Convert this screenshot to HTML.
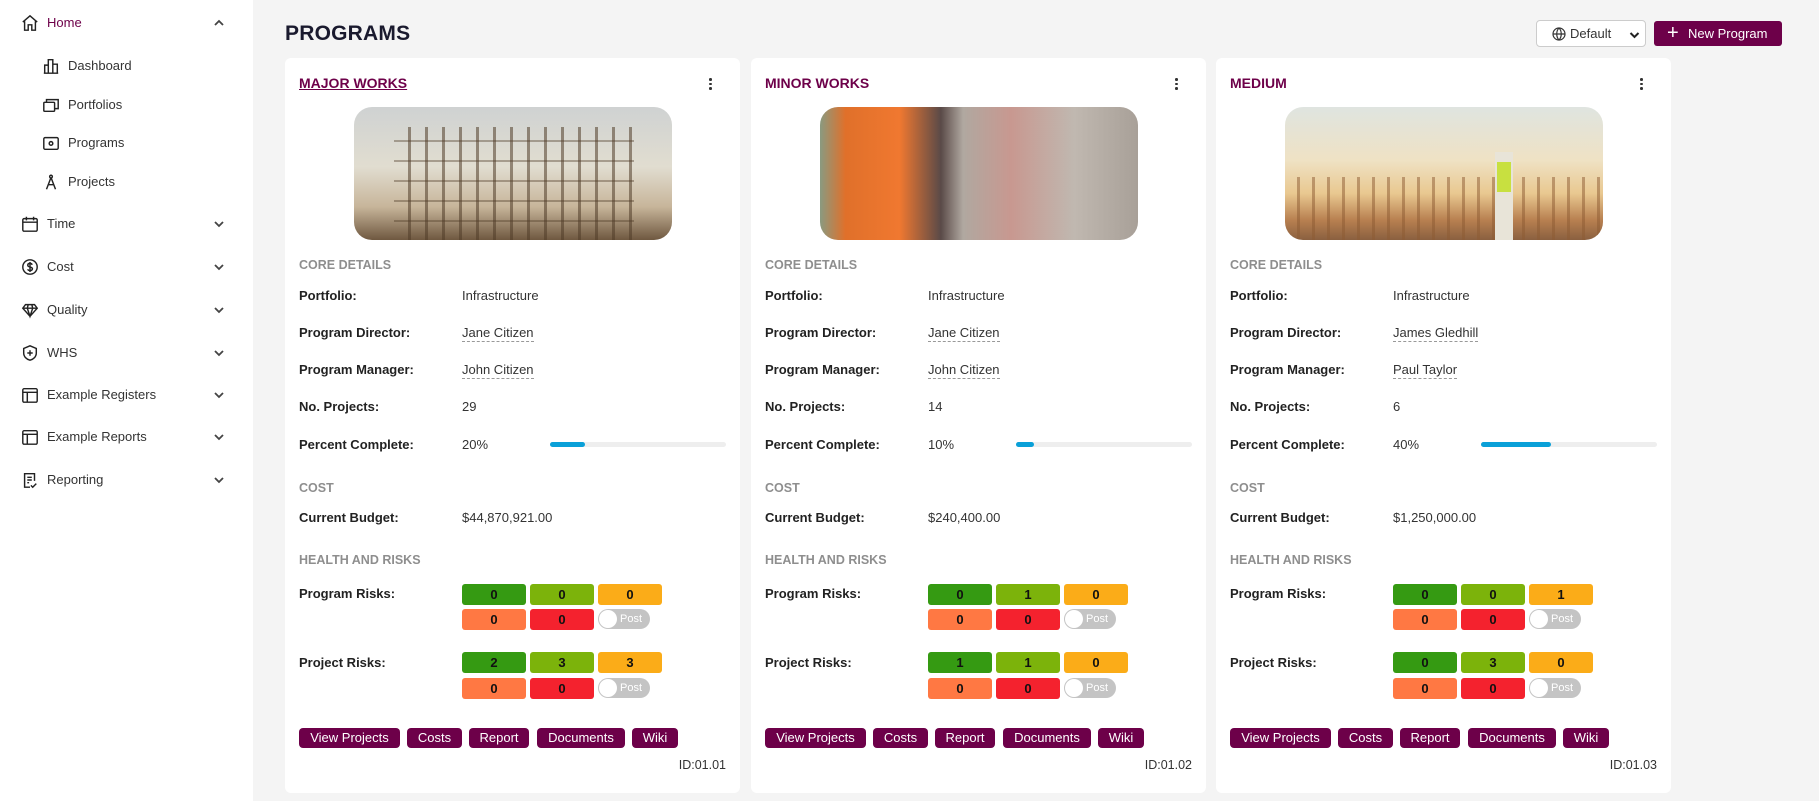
<!DOCTYPE html>
<html><head><meta charset="utf-8"><style>
*{box-sizing:border-box;margin:0;padding:0}
body{width:1819px;height:801px;overflow:hidden;background:#f4f4f4;font-family:"Liberation Sans",Arial,sans-serif;color:#222;position:relative}
.side{position:absolute;left:0;top:0;width:253px;height:801px;background:#fff}
.ni{position:absolute;left:0;font-size:13px;color:#333;height:20px;line-height:20px;width:253px}
.ni svg{position:absolute;top:1px;width:18px;height:18px;fill:none;stroke:#222;stroke-width:1.6}
.ni .t{position:absolute}
.ni svg.ch{left:214px;top:6px;width:10px;height:8px;stroke:#444;stroke-width:1.8}
h1{position:absolute;left:285px;top:22px;font-size:21px;font-weight:bold;color:#1a1a2e;letter-spacing:.2px}
.btn1{position:absolute;left:1536px;top:20px;width:110px;height:27px;background:#fff;border:1px solid #ccc;border-radius:4px;font-size:13px;color:#333;line-height:25px;padding-left:33px}
.btn2{position:absolute;left:1654px;top:21px;width:128px;height:25px;background:#6d0049;border-radius:3px;color:#fff;font-size:13px;line-height:25px;padding-left:34px}
.card{position:absolute;top:58px;width:455px;height:735px;background:#fff;border-radius:6px}
.card *{position:absolute}
.ttl{left:14px;top:17px;font-size:14px;font-weight:bold;color:#6d0049}
.dots{right:28px;top:20px;width:3px}
.dots i{position:relative;display:block;width:2.5px;height:2.5px;background:#333;border-radius:50%;margin-bottom:2px}
.img{left:69px;top:49px;width:318px;height:133px;border-radius:18px;overflow:hidden}
.sec{left:14px;font-size:12.5px;font-weight:bold;color:#8e8e8e}
.lb{left:14px;font-size:13px;font-weight:bold;color:#222}
.vl{left:177px;font-size:13px;color:#333}
.u{border-bottom:1px dashed #999;padding-bottom:1px}
.bar{left:265px;top:384px;width:176px;height:5px;background:#eee;border-radius:3px}
.bar b{left:0;top:0;height:5px;background:#0aa0d8;border-radius:3px}
.rk{width:64px;height:21px;border-radius:3px;font-size:13px;text-align:center;line-height:21px;color:#111;font-weight:bold}
.g1{background:#359a12}.g2{background:#7cb30b}.g3{background:#fbac18}.g4{background:#ff7843}.g5{background:#f4222e}
.tg{width:52px;height:20px;border-radius:10px;background:#c4c4c4;color:#fff;font-size:11px;line-height:20px;padding-left:22px}
.tg::before{content:"";position:absolute;left:1px;top:1px;width:18px;height:18px;border-radius:50%;background:#fff}
.bt{top:670px;height:20px;background:#6d0049;color:#fff;font-size:13px;line-height:20px;text-align:center;border-radius:4px}
.id{right:14px;top:700px;font-size:12.5px;color:#333}
</style></head><body>
<div class="side">
 <div class="ni" style="top:13px"><svg style="left:21px" viewBox="0 0 20 20"><path d="M2 9L10 2l8 7M4 8v10h4v-6h4v6h4V8"/></svg><span class="t" style="left:47px;color:#6d0049">Home</span><svg class="ch" viewBox="0 0 10 8"><path d="M1 6l4-4 4 4"/></svg></div>
 <div class="ni" style="top:56px"><svg style="left:42px" viewBox="0 0 20 20"><path d="M2 18h16M3 18V9h4v9M7 18V3h5v15M12 18V8h5v10"/></svg><span class="t" style="left:68px">Dashboard</span></div>
 <div class="ni" style="top:95px"><svg style="left:42px" viewBox="0 0 20 20"><rect x="2" y="7" width="12" height="10" rx="1"/><path d="M5 7V4h13v10h-4"/></svg><span class="t" style="left:68px">Portfolios</span></div>
 <div class="ni" style="top:133px"><svg style="left:42px" viewBox="0 0 20 20"><rect x="2" y="4" width="16" height="13" rx="1.5"/><circle cx="10" cy="10.5" r="2"/></svg><span class="t" style="left:68px">Programs</span></div>
 <div class="ni" style="top:172px"><svg style="left:42px" viewBox="0 0 20 20"><circle cx="10" cy="4" r="1.5"/><path d="M10 5L5 18M10 5l5 13M7 13h6"/></svg><span class="t" style="left:68px">Projects</span></div>
 <div class="ni" style="top:214px"><svg style="left:21px" viewBox="0 0 20 20"><rect x="2" y="4" width="16" height="14" rx="1.5"/><path d="M2 8h16M6 2v4M14 2v4"/></svg><span class="t" style="left:47px">Time</span><svg class="ch" viewBox="0 0 10 8"><path d="M1 2l4 4 4-4"/></svg></div>
 <div class="ni" style="top:257px"><svg style="left:21px" viewBox="0 0 20 20"><circle cx="10" cy="10" r="8"/><path d="M12.5 7.5c-.5-1-1.5-1.5-2.5-1.5-1.5 0-2.5.8-2.5 2s1 1.6 2.5 2 2.7.8 2.7 2-1.2 2-2.7 2c-1.2 0-2.200-.6-2.6-1.5M10 4.5v11"/></svg><span class="t" style="left:47px">Cost</span><svg class="ch" viewBox="0 0 10 8"><path d="M1 2l4 4 4-4"/></svg></div>
 <div class="ni" style="top:300px"><svg style="left:21px" viewBox="0 0 20 20"><path d="M5 4h10l3 4-8 9-8-9zM2 8h16M8 4L7 8l3 9 3-9-1-4"/></svg><span class="t" style="left:47px">Quality</span><svg class="ch" viewBox="0 0 10 8"><path d="M1 2l4 4 4-4"/></svg></div>
 <div class="ni" style="top:343px"><svg style="left:21px" viewBox="0 0 20 20"><path d="M10 2l7 3v5c0 4-3 7-7 8-4-1-7-4-7-8V5z M10 7v6M7 10h6"/></svg><span class="t" style="left:47px">WHS</span><svg class="ch" viewBox="0 0 10 8"><path d="M1 2l4 4 4-4"/></svg></div>
 <div class="ni" style="top:385px"><svg style="left:21px" viewBox="0 0 20 20"><rect x="2" y="3" width="16" height="15" rx="1.5"/><path d="M2 7h16M7 7v11"/></svg><span class="t" style="left:47px">Example Registers</span><svg class="ch" viewBox="0 0 10 8"><path d="M1 2l4 4 4-4"/></svg></div>
 <div class="ni" style="top:427px"><svg style="left:21px" viewBox="0 0 20 20"><rect x="2" y="3" width="16" height="15" rx="1.5"/><path d="M2 7h16M7 7v11"/></svg><span class="t" style="left:47px">Example Reports</span><svg class="ch" viewBox="0 0 10 8"><path d="M1 2l4 4 4-4"/></svg></div>
 <div class="ni" style="top:470px"><svg style="left:21px" viewBox="0 0 20 20"><path d="M15 11V3H4v15h6M7 7h5M7 10h5M7 13h2M11 16l2 2 4-4"/></svg><span class="t" style="left:47px">Reporting</span><svg class="ch" viewBox="0 0 10 8"><path d="M1 2l4 4 4-4"/></svg></div>
</div>
<h1>PROGRAMS</h1>
<div class="btn1"><svg style="position:absolute;left:15px;top:6px" width="14" height="14" viewBox="0 0 14 14" fill="none" stroke="#333" stroke-width="1.2"><circle cx="7" cy="7" r="6"/><path d="M1 7h12M7 1c-3 3-3 9 0 12M7 1c3 3 3 9 0 12"/></svg>Default<svg style="position:absolute;left:92px;top:10px" width="11" height="8" viewBox="0 0 10 8" fill="none" stroke="#222" stroke-width="2"><path d="M1 2l4 4 4-4"/></svg></div>
<div class="btn2"><span style="position:absolute;left:13px;top:0;font-size:20px">+</span>New Program</div>

<div class="card" style="left:285px">
 <div class="ttl" style="text-decoration:underline">MAJOR WORKS</div>
 <div class="dots"><i></i><i></i><i></i></div>
 <div class="img" style="background:linear-gradient(180deg,#cfd2d2 0%,#e1ddd0 45%,#c7b59a 75%,#6f5840 100%)"><div style="left:40px;top:20px;width:240px;height:113px;background:repeating-linear-gradient(90deg,transparent 0 14px,rgba(80,60,40,.55) 14px 17px),repeating-linear-gradient(0deg,transparent 0 18px,rgba(80,60,40,.4) 18px 20px)"></div></div>
 <div class="sec" style="top:200px">CORE DETAILS</div>
 <div class="lb" style="top:230px">Portfolio:</div><div class="vl" style="top:230px">Infrastructure</div>
 <div class="lb" style="top:267px">Program Director:</div><div class="vl u" style="top:267px">Jane Citizen</div>
 <div class="lb" style="top:304px">Program Manager:</div><div class="vl u" style="top:304px">John Citizen</div>
 <div class="lb" style="top:341px">No. Projects:</div><div class="vl" style="top:341px">29</div>
 <div class="lb" style="top:379px">Percent Complete:</div><div class="vl" style="top:379px">20%</div>
 <div class="bar"><b style="width:35px"></b></div>
 <div class="sec" style="top:423px">COST</div>
 <div class="lb" style="top:452px">Current Budget:</div><div class="vl" style="top:452px">$44,870,921.00</div>
 <div class="sec" style="top:495px">HEALTH AND RISKS</div>
 <div class="lb" style="top:528px">Program Risks:</div>
 <div class="rk g1" style="left:177px;top:526px">0</div><div class="rk g2" style="left:245px;top:526px">0</div><div class="rk g3" style="left:313px;top:526px">0</div>
 <div class="rk g4" style="left:177px;top:551px">0</div><div class="rk g5" style="left:245px;top:551px">0</div><div class="tg" style="left:313px;top:551px">Post</div>
 <div class="lb" style="top:597px">Project Risks:</div>
 <div class="rk g1" style="left:177px;top:594px">2</div><div class="rk g2" style="left:245px;top:594px">3</div><div class="rk g3" style="left:313px;top:594px">3</div>
 <div class="rk g4" style="left:177px;top:620px">0</div><div class="rk g5" style="left:245px;top:620px">0</div><div class="tg" style="left:313px;top:620px">Post</div>
 <div class="bt" style="left:14px;width:101px">View Projects</div><div class="bt" style="left:122px;width:55px">Costs</div><div class="bt" style="left:184px;width:60px">Report</div><div class="bt" style="left:252px;width:88px">Documents</div><div class="bt" style="left:347px;width:46px">Wiki</div>
 <div class="id">ID:01.01</div>
</div>

<div class="card" style="left:751px">
 <div class="ttl">MINOR WORKS</div>
 <div class="dots"><i></i><i></i><i></i></div>
 <div class="img" style="background:linear-gradient(90deg,#8a9a80 0%,#e0702a 8%,#f07830 25%,#5a4a48 38%,#b0a8a0 45%,#c89890 60%,#c0b8b0 80%,#a8a098 100%)"></div>
 <div class="sec" style="top:200px">CORE DETAILS</div>
 <div class="lb" style="top:230px">Portfolio:</div><div class="vl" style="top:230px">Infrastructure</div>
 <div class="lb" style="top:267px">Program Director:</div><div class="vl u" style="top:267px">Jane Citizen</div>
 <div class="lb" style="top:304px">Program Manager:</div><div class="vl u" style="top:304px">John Citizen</div>
 <div class="lb" style="top:341px">No. Projects:</div><div class="vl" style="top:341px">14</div>
 <div class="lb" style="top:379px">Percent Complete:</div><div class="vl" style="top:379px">10%</div>
 <div class="bar"><b style="width:18px"></b></div>
 <div class="sec" style="top:423px">COST</div>
 <div class="lb" style="top:452px">Current Budget:</div><div class="vl" style="top:452px">$240,400.00</div>
 <div class="sec" style="top:495px">HEALTH AND RISKS</div>
 <div class="lb" style="top:528px">Program Risks:</div>
 <div class="rk g1" style="left:177px;top:526px">0</div><div class="rk g2" style="left:245px;top:526px">1</div><div class="rk g3" style="left:313px;top:526px">0</div>
 <div class="rk g4" style="left:177px;top:551px">0</div><div class="rk g5" style="left:245px;top:551px">0</div><div class="tg" style="left:313px;top:551px">Post</div>
 <div class="lb" style="top:597px">Project Risks:</div>
 <div class="rk g1" style="left:177px;top:594px">1</div><div class="rk g2" style="left:245px;top:594px">1</div><div class="rk g3" style="left:313px;top:594px">0</div>
 <div class="rk g4" style="left:177px;top:620px">0</div><div class="rk g5" style="left:245px;top:620px">0</div><div class="tg" style="left:313px;top:620px">Post</div>
 <div class="bt" style="left:14px;width:101px">View Projects</div><div class="bt" style="left:122px;width:55px">Costs</div><div class="bt" style="left:184px;width:60px">Report</div><div class="bt" style="left:252px;width:88px">Documents</div><div class="bt" style="left:347px;width:46px">Wiki</div>
 <div class="id">ID:01.02</div>
</div>

<div class="card" style="left:1216px">
 <div class="ttl">MEDIUM</div>
 <div class="dots"><i></i><i></i><i></i></div>
 <div class="img" style="background:linear-gradient(180deg,#dfe4e0 0%,#efe2c4 40%,#e9c890 65%,#b88050 85%,#8a6040 100%)"><div style="left:0;top:70px;width:318px;height:63px;background:repeating-linear-gradient(90deg,transparent 0 12px,rgba(140,90,50,.5) 12px 15px)"></div><div style="left:210px;top:45px;width:18px;height:88px;background:#e8e4d8"></div><div style="left:212px;top:55px;width:14px;height:30px;background:#c8e040"></div></div>
 <div class="sec" style="top:200px">CORE DETAILS</div>
 <div class="lb" style="top:230px">Portfolio:</div><div class="vl" style="top:230px">Infrastructure</div>
 <div class="lb" style="top:267px">Program Director:</div><div class="vl u" style="top:267px">James Gledhill</div>
 <div class="lb" style="top:304px">Program Manager:</div><div class="vl u" style="top:304px">Paul Taylor</div>
 <div class="lb" style="top:341px">No. Projects:</div><div class="vl" style="top:341px">6</div>
 <div class="lb" style="top:379px">Percent Complete:</div><div class="vl" style="top:379px">40%</div>
 <div class="bar"><b style="width:70px"></b></div>
 <div class="sec" style="top:423px">COST</div>
 <div class="lb" style="top:452px">Current Budget:</div><div class="vl" style="top:452px">$1,250,000.00</div>
 <div class="sec" style="top:495px">HEALTH AND RISKS</div>
 <div class="lb" style="top:528px">Program Risks:</div>
 <div class="rk g1" style="left:177px;top:526px">0</div><div class="rk g2" style="left:245px;top:526px">0</div><div class="rk g3" style="left:313px;top:526px">1</div>
 <div class="rk g4" style="left:177px;top:551px">0</div><div class="rk g5" style="left:245px;top:551px">0</div><div class="tg" style="left:313px;top:551px">Post</div>
 <div class="lb" style="top:597px">Project Risks:</div>
 <div class="rk g1" style="left:177px;top:594px">0</div><div class="rk g2" style="left:245px;top:594px">3</div><div class="rk g3" style="left:313px;top:594px">0</div>
 <div class="rk g4" style="left:177px;top:620px">0</div><div class="rk g5" style="left:245px;top:620px">0</div><div class="tg" style="left:313px;top:620px">Post</div>
 <div class="bt" style="left:14px;width:101px">View Projects</div><div class="bt" style="left:122px;width:55px">Costs</div><div class="bt" style="left:184px;width:60px">Report</div><div class="bt" style="left:252px;width:88px">Documents</div><div class="bt" style="left:347px;width:46px">Wiki</div>
 <div class="id">ID:01.03</div>
</div>
</body></html>
